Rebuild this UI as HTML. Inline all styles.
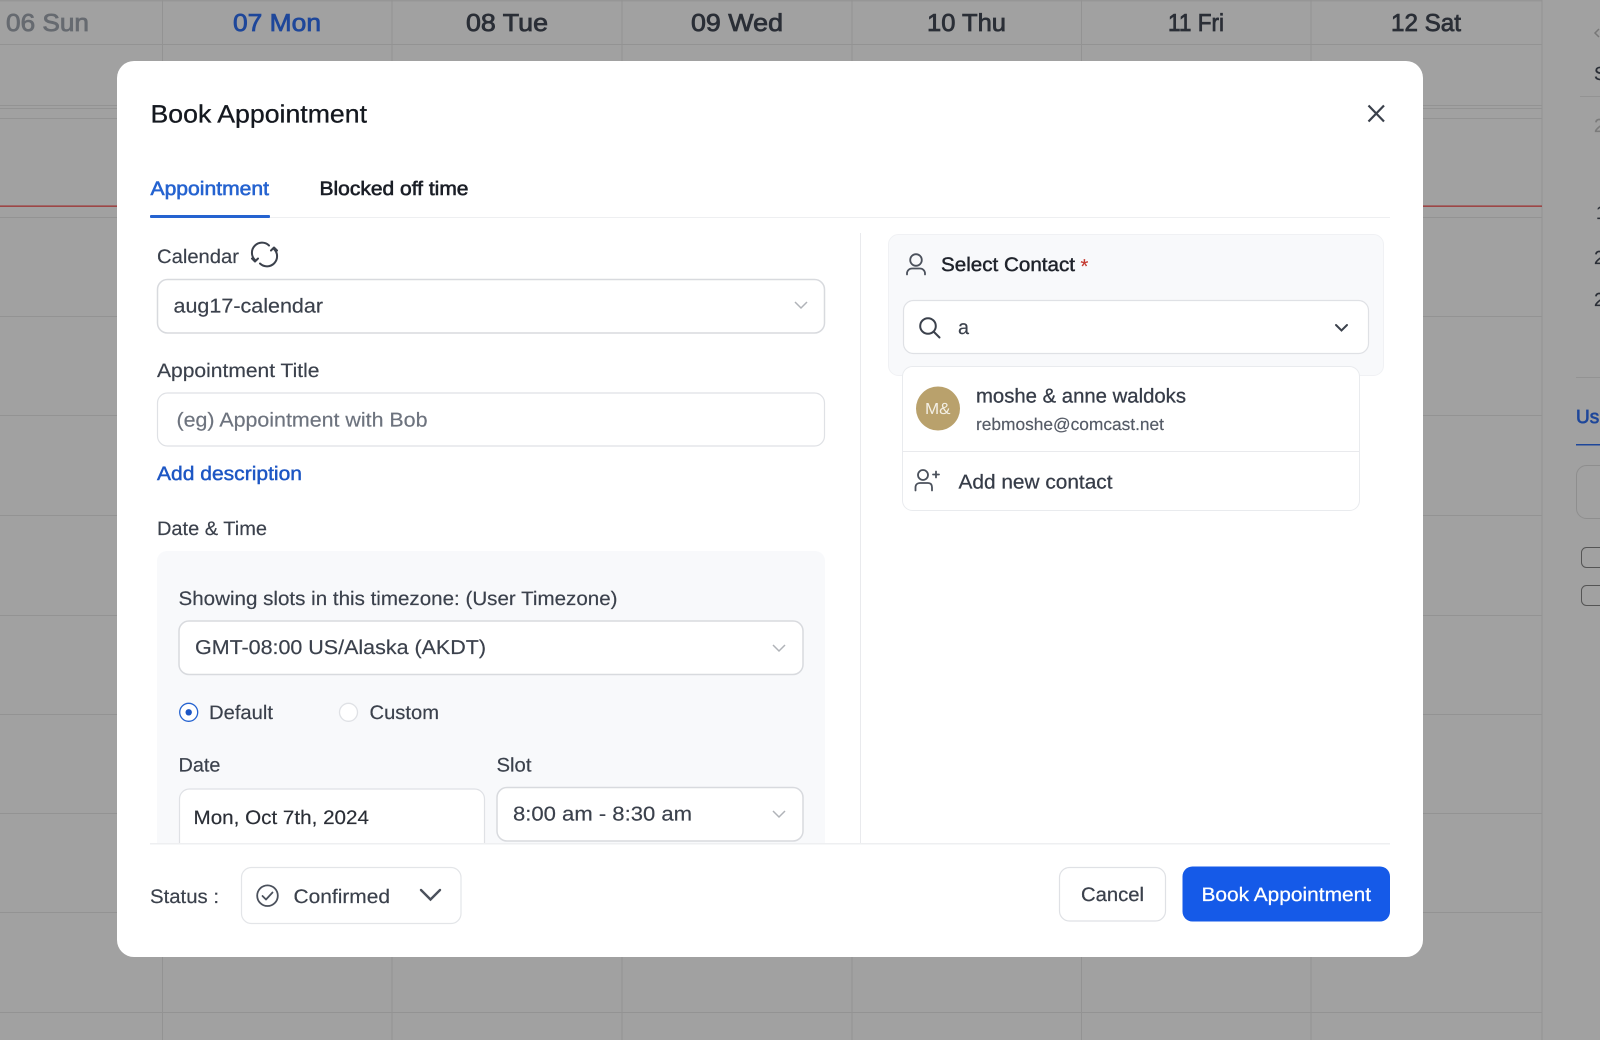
<!DOCTYPE html>
<html lang="en">
<head>
<meta charset="utf-8">
<title>Book Appointment</title>
<style>
html,body{margin:0;padding:0;width:1600px;height:1040px;overflow:hidden;background:#a1a1a1}
svg{display:block;filter:blur(.3px)}
text{font-family:"Liberation Sans",sans-serif;font-size:19.5px;color:#3b414c;fill:currentColor;stroke:currentColor;stroke-width:.18;text-rendering:geometricPrecision}
.h{font-size:24.5px;color:#2a2e36;stroke-width:.75}
.g{fill:none;stroke:#939393;stroke-width:1}
.f{fill:#fff;stroke:#dfe1e5;stroke-width:1.2}
</style>
</head>
<body>
<svg width="1600" height="1040" viewBox="0 0 1600 1040" xmlns="http://www.w3.org/2000/svg">
<rect width="1600" height="1040" fill="#a1a1a1"/>
<rect width="1542" height="1.500" fill="#969696"/>
<path class="g" d="M162.500 0V1040M392 0V1040M622 0V1040M852 0V1040M1081.500 0V1040M1311 0V1040M1542 0V1040"/>
<path class="g" d="M0 44.500H1542M0 105.500H1542M0 108.500H1542M0 118.500H1542M0 217.500H1542M0 316.500H1542M0 415.500H1542M0 515.500H1542M0 615.500H1542M0 714.500H1542M0 813.500H1542M0 912.500H1542M0 1012.500H1542"/>
<rect x="0" y="205.500" width="1542" height="1.300" fill="#9c3030"/>

<text class="h" x="6" y="31" textLength="83" lengthAdjust="spacingAndGlyphs" style="color:#666a70">06 Sun</text>
<text class="h" x="233" y="31" textLength="88" lengthAdjust="spacingAndGlyphs" style="color:#1e479a">07 Mon</text>
<text class="h" x="466" y="31" textLength="82" lengthAdjust="spacingAndGlyphs">08 Tue</text>
<text class="h" x="691" y="31" textLength="92" lengthAdjust="spacingAndGlyphs">09 Wed</text>
<text class="h" x="927" y="31" textLength="79" lengthAdjust="spacingAndGlyphs">10 Thu</text>
<text class="h" x="1168" y="31" textLength="56" lengthAdjust="spacingAndGlyphs">11 Fri</text>
<text class="h" x="1391" y="31" textLength="70" lengthAdjust="spacingAndGlyphs">12 Sat</text>

<!-- right sidebar fragments -->
<path d="M1599 29l-4 4 4 4" fill="none" stroke="#777" stroke-width="1.500"/>
<text x="1594" y="80" style="font-size:19px;color:#2a2e36">S</text>
<rect x="1580" y="96" width="20" height="1" fill="#939393"/>
<text x="1594" y="132" style="font-size:19px;color:#7b7b7b">2</text>
<text x="1596" y="219" style="font-size:19px;color:#2a2e36">1</text>
<text x="1594" y="264" style="font-size:19px;color:#2a2e36">2</text>
<text x="1594" y="306" style="font-size:19px;color:#2a2e36">2</text>
<rect x="1576" y="377" width="24" height="1" fill="#939393"/>
<text x="1576" y="423" style="font-size:19px;color:#1e479a;stroke-width:.7">Us</text>
<rect x="1576" y="444" width="24" height="1.500" fill="#1e479a"/>
<rect x="1576.500" y="465.500" width="40" height="53" rx="10" fill="none" stroke="#8e8e8e"/>
<rect x="1581.500" y="547.500" width="30" height="20" rx="5" fill="none" stroke="#555"/>
<rect x="1581.500" y="585.500" width="30" height="20" rx="5" fill="none" stroke="#555"/>

<!-- modal -->
<rect x="117" y="61" width="1306" height="896" rx="17" fill="#fff"/>
<text x="150.500" y="122.500" textLength="216.500" lengthAdjust="spacingAndGlyphs" style="font-size:25px;color:#14181f;stroke-width:.3">Book Appointment</text>
<path d="M1368.500 105.500l15.500 16M1384 105.500l-15.500 16" stroke="#3a404b" stroke-width="2.200" fill="none"/>

<text x="150.500" y="195" textLength="118.500" lengthAdjust="spacingAndGlyphs" style="font-size:19.500px;color:#2563d0;stroke-width:.6">Appointment</text>
<text x="319.500" y="195" textLength="149" lengthAdjust="spacingAndGlyphs" style="font-size:19.500px;color:#1a1e26;stroke-width:.6">Blocked off time</text>
<rect x="151" y="217" width="1239" height="1" fill="#eeeff1"/>
<rect x="150" y="215" width="120" height="3" rx="1" fill="#2563d0"/>

<rect x="860" y="233" width="1" height="611" fill="#e9eaed"/>

<!-- left column -->
<text x="157" y="263" textLength="82" lengthAdjust="spacingAndGlyphs">Calendar</text>
<g fill="none" stroke="#3b414c" stroke-width="2" stroke-linecap="round" stroke-linejoin="round">
<path d="M255 260A10 10 0 0 1 269 245.500"/>
<path d="M274 249A10 10 0 0 1 260 263.500"/>
<path d="M252 258.500l3 3 3-3M271 250.500l3-3 3 3"/>
</g>
<rect x="157.500" y="279.500" width="667" height="53.500" rx="10" class="f" style="stroke:#d8dade;stroke-width:1.500"/>
<text x="173.500" y="312.500" textLength="149.500" lengthAdjust="spacingAndGlyphs" style="font-size:20px">aug17-calendar</text>
<path d="M795 302l6 6 6-6" fill="none" stroke="#b0b3b8" stroke-width="1.500"/>

<text x="157" y="377" textLength="162.500" lengthAdjust="spacingAndGlyphs">Appointment Title</text>
<rect x="157.500" y="393" width="667" height="53" rx="10" class="f"/>
<text x="176.500" y="426.500" textLength="251" lengthAdjust="spacingAndGlyphs" style="font-size:20px;color:#6d737e">(eg) Appointment with Bob</text>
<text x="157" y="480" textLength="145" lengthAdjust="spacingAndGlyphs" style="color:#1d56c4;stroke-width:.45">Add description</text>
<text x="157" y="535" textLength="110" lengthAdjust="spacingAndGlyphs">Date &amp; Time</text>

<path d="M157 843V561a10 10 0 0 1 10-10h648a10 10 0 0 1 10 10V843z" fill="#f8f9fb"/>
<text x="178.500" y="605" textLength="439" lengthAdjust="spacingAndGlyphs">Showing slots in this timezone: (User Timezone)</text>
<rect x="179" y="621" width="624" height="53.500" rx="10" class="f" style="stroke:#d8dade;stroke-width:1.500"/>
<text x="195" y="654" textLength="291" lengthAdjust="spacingAndGlyphs" style="font-size:20px">GMT-08:00 US/Alaska (AKDT)</text>
<path d="M773 645l6 6 6-6" fill="none" stroke="#b0b3b8" stroke-width="1.500"/>

<circle cx="188.700" cy="712.300" r="9" fill="#fff" stroke="#2563d0" stroke-width="1.300"/>
<circle cx="188.700" cy="712.300" r="3.200" fill="#1d56c4"/>
<text x="209" y="719" textLength="64" lengthAdjust="spacingAndGlyphs">Default</text>
<circle cx="348.500" cy="712.300" r="9" fill="#fff" stroke="#dfe1e5" stroke-width="1.300"/>
<text x="369.500" y="719" textLength="69.500" lengthAdjust="spacingAndGlyphs">Custom</text>

<text x="178.500" y="771.500" textLength="42" lengthAdjust="spacingAndGlyphs">Date</text>
<text x="496.500" y="771.500" textLength="35" lengthAdjust="spacingAndGlyphs">Slot</text>
<path d="M179.500 843V799a10 10 0 0 1 10-10h285a10 10 0 0 1 10 10V843" fill="#fff" stroke="#dfe1e5" stroke-width="1.200"/>
<text x="193.500" y="824" textLength="175.500" lengthAdjust="spacingAndGlyphs" style="color:#2a2e36">Mon, Oct 7th, 2024</text>
<rect x="497" y="787.500" width="306" height="53.500" rx="10" class="f" style="stroke:#d8dade;stroke-width:1.500"/>
<text x="513" y="820.500" textLength="179" lengthAdjust="spacingAndGlyphs" style="font-size:20px">8:00 am - 8:30 am</text>
<path d="M773 811l6 6 6-6" fill="none" stroke="#b0b3b8" stroke-width="1.500"/>

<rect x="150" y="843" width="1240" height="1.500" fill="#eeeff1"/>

<!-- right column -->
<rect x="888.500" y="234.500" width="495" height="141" rx="10" fill="#f8f9fb" stroke="#f0f1f4"/>
<g fill="none" stroke="#4b515c" stroke-width="1.800" stroke-linecap="round">
<circle cx="916" cy="260" r="5.800"/>
<path d="M907 274.500v-1c0-3 2.500-5 5-5h8c2.500 0 5 2 5 5v1"/>
</g>
<text x="941" y="271" textLength="134" lengthAdjust="spacingAndGlyphs" style="color:#1f232b;stroke-width:.45">Select Contact</text>
<text x="1080.500" y="273" style="font-size:20px;color:#c43a30">*</text>
<rect x="903.500" y="300.500" width="465" height="53" rx="10" class="f"/>
<g fill="none" stroke="#3b414c" stroke-width="2" stroke-linecap="round">
<circle cx="928" cy="326" r="7.800"/>
<path d="M934 332l5.500 5.500"/>
<path d="M1336 325l5.500 5.500 5.500-5.500"/>
</g>
<text x="958" y="334" textLength="11" lengthAdjust="spacingAndGlyphs" style="font-size:20px">a</text>

<rect x="902.500" y="366.500" width="457" height="144" rx="10" fill="#fff" stroke="#e9ebee"/>
<circle cx="938" cy="408.500" r="22" fill="#b9a16c"/>
<text x="925" y="414" textLength="25.500" lengthAdjust="spacingAndGlyphs" style="font-size:16px;color:#f3efe4;stroke-width:0">M&amp;</text>
<text x="976" y="402.500" textLength="210" lengthAdjust="spacingAndGlyphs" style="font-size:20px;color:#363c48;stroke-width:.3">moshe &amp; anne waldoks</text>
<text x="976" y="430" textLength="188" lengthAdjust="spacingAndGlyphs" style="font-size:17px;color:#555b66">rebmoshe@comcast.net</text>
<rect x="902.500" y="451" width="457" height="1" fill="#e9eaed"/>
<g fill="none" stroke="#4b515c" stroke-width="1.800" stroke-linecap="round">
<circle cx="923" cy="475" r="5"/>
<path d="M915.500 490.500v-3c0-3 2-4.500 4.500-4.500h8c2.500 0 4 1.500 4 4.500v3"/>
<path d="M933 474.500h6M936 471.500v6"/>
</g>
<text x="958.500" y="488.500" textLength="154" lengthAdjust="spacingAndGlyphs" style="font-size:20px;color:#363c48;stroke-width:.25">Add new contact</text>

<!-- footer -->
<text x="150" y="903" textLength="69" lengthAdjust="spacingAndGlyphs">Status :</text>
<rect x="241.500" y="867.500" width="219.500" height="56" rx="10" fill="#fff" stroke="#e3e5e8" stroke-width="1.200"/>
<g fill="none" stroke="#4b515c" stroke-width="1.800" stroke-linecap="round" stroke-linejoin="round">
<circle cx="267.500" cy="895.700" r="10.300"/>
<path d="M262.500 896l3.500 3.500 6.500-7"/>
</g>
<path d="M421 890l9.500 9.500 9.500-9.500" fill="none" stroke="#4b515c" stroke-width="2.400" stroke-linecap="round"/>
<text x="293.500" y="903" textLength="96.500" lengthAdjust="spacingAndGlyphs">Confirmed</text>

<rect x="1059.500" y="867.500" width="106" height="53.500" rx="10" fill="#fff" stroke="#dfe1e5" stroke-width="1.200"/>
<text x="1081" y="901" textLength="63" lengthAdjust="spacingAndGlyphs" style="stroke-width:.25">Cancel</text>
<rect x="1182.500" y="866.500" width="207.500" height="55" rx="10" fill="#155ae8"/>
<text x="1201.500" y="901" textLength="169.500" lengthAdjust="spacingAndGlyphs" style="color:#fff;stroke-width:.25">Book Appointment</text>
</svg>
</body>
</html>
